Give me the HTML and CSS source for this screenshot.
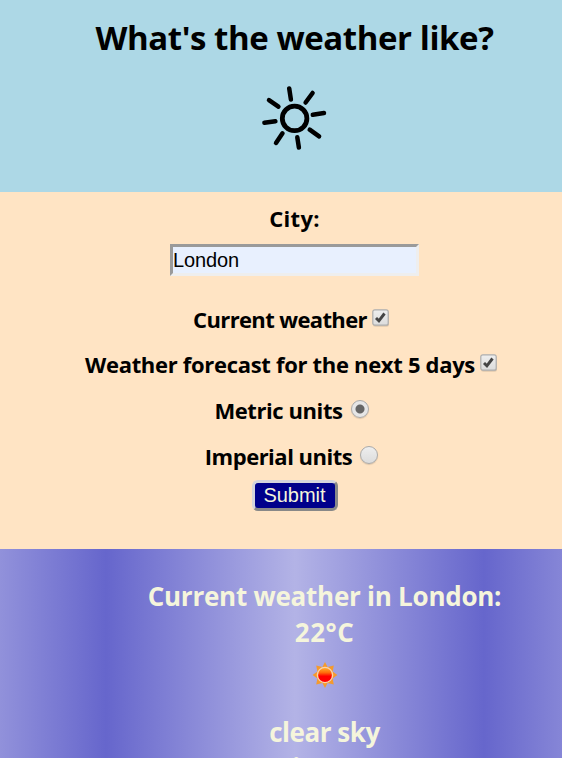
FILE: index.html
```html
<!DOCTYPE html>
<html lang="en">
<head>
<meta charset="utf-8">
<title>What's the weather like?</title>
<link rel="stylesheet" href="styles.css">
</head>
<body>
<header class="header">
  <h1 class="title">What's the weather like?</h1>
  <svg class="logo" width="68" height="68" viewBox="-34 -34 68 68" fill="none" stroke="#000" stroke-width="4.5" stroke-linecap="round">
    <circle cx=".6" cy=".4" r="12.3" stroke-width="4.8"/>
    <path d="M-3.1-18.5-4.8-29.6M11.6-15.5 18.6-25M18.8-3.2 30-5M15.7 11.7 25.1 18.4M3.3 19.3 4.9 29.6M-11.5 15.3-18 25M-18.6 3.2-29.6 4.8M-15.6-11.4-25-17.9"/>
  </svg>
</header>
<form class="form">
  <label class="label city" for="city">City:</label>
  <input class="input" id="city" type="text" value="London">
  <label class="row current"><span class="text">Current weather</span><svg class="check" width="18" height="19" viewBox="0 0 18 19"><use href="#box"/></svg></label>
  <label class="row forecast"><span class="text">Weather forecast for the next 5 days</span><svg class="check" width="18" height="19" viewBox="0 0 18 19"><use href="#box"/></svg></label>
  <label class="row metric"><span class="text">Metric units</span><span class="radio on"></span></label>
  <label class="row imperial"><span class="text">Imperial units</span><span class="radio"></span></label>
  <button class="submit" type="button">Submit</button>
</form>
<section class="result">
  <h2 class="place">Current weather in London:</h2>
  <p class="temp">22°C</p>
  <svg class="sun" width="26" height="28" viewBox="-13 -14 26 28">
    <defs><linearGradient id="g" x2="0" y2="1"><stop offset="0" stop-color="#ffb530"/><stop offset=".35" stop-color="#ff6a0a"/><stop offset=".58" stop-color="#f00"/></linearGradient></defs>
    <path fill="#f59a2c" d="M0-13 2.6-8 8.8-9.6 7.6-3.4 12.4 0 7.6 3.4 8.8 9.6 2.6 8 0 13-2.6 8-8.8 9.6-7.6 3.4-12.4 0-7.6-3.4-8.8-9.6-2.6-8Z"/>
    <circle r="7.6" fill="url(#g)" stroke="#f8d3ae" stroke-width="1.4"/>
  </svg>
  <p class="sky">clear sky</p>
  <p class="more">Min 22°C</p>
</section>
<svg class="symbols" width="0" height="0">
  <linearGradient id="face" x2="0" y2="1"><stop offset="0" stop-color="#eee"/><stop offset="1" stop-color="#dcdcdc"/></linearGradient>
  <symbol id="box" viewBox="0 0 18 19">
    <rect x="1" y="1.8" width="16" height="16" rx="2.5" fill="#000" opacity=".12"/>
    <rect x=".8" y=".8" width="15.4" height="15.4" rx="2" fill="url(#face)" stroke="#adadad" stroke-width="1.2"/>
    <path d="M4 9 6.9 11.8 12.5 4.5" fill="none" stroke="#444" stroke-width="2.9"/>
  </symbol>
</svg>
</body>
</html>
```
FILE: styles.css
```css
* { box-sizing: border-box; }
body { margin: 0; height: 758px; overflow: hidden; font-family: "Open Sans", "Noto Sans", sans-serif; font-weight: 700; color: #000; }
h1, h2, p { margin: 0; font-weight: 700; white-space: nowrap; }
.header { height: 192px; background: #add8e6; display: flex; flex-direction: column; align-items: center; padding: 14px 0 0 27px; }
.title { font-size: 33px; line-height: 48px; letter-spacing: -.43px; }
.logo { margin: 22px 1px 0 0; }
.form { height: 357px; background: #ffe4c4; display: flex; flex-direction: column; align-items: center; padding: 11px 0 0 27px; font-size: 22px; }
.label { line-height: 30px; }
.city { letter-spacing: .3px; }
.input { width: 249px; height: 32px; margin: 11px 0 28px; padding: 0; border: 3px solid; border-color: #9a9a9a #eee #eee #9a9a9a; background: #e8f0fe; font: 20px "Liberation Sans", sans-serif; letter-spacing: -.1px; }
.row { height: 45.7px; display: flex; align-items: flex-start; line-height: 30px; white-space: nowrap; margin-left: -6px; }
.current { height: 45px; letter-spacing: -.63px; }
.forecast { height: 46.4px; letter-spacing: -.31px; }
.metric { letter-spacing: -.42px; }
.imperial { letter-spacing: -.5px; }
.check { margin: 5px 0 0 5px; }
.radio { width: 18px; height: 18px; margin: 5px 0 0 8px; border: 1px solid #aaa; border-radius: 50%; background: linear-gradient(#eee, #dcdcdc); box-shadow: 0 1px 1px #0002; }
.on { background: radial-gradient(circle, #666 4px, #e6e6e6 5px); }
.submit { width: 86px; height: 31px; flex: none; margin-top: -7px; padding: 0; border: 3px solid; border-color: #d5d5dc #888 #888 #d5d5dc; border-radius: 6px; background: #00008b; color: #f5f5dc; font: 20px/22px "Liberation Sans", sans-serif; }
.result { height: 209px; overflow: hidden; display: flex; flex-direction: column; align-items: center; padding: 29px 0 0 87px; color: #f5f5dc; font-size: 26px; line-height: 36px; background: linear-gradient(90deg, #b3b3e6, #66c 50%, #b3b3e6) -83px 0 / 378px 100%; }
.place { font-size: 26px; letter-spacing: -.25px; }
.temp { letter-spacing: .5px; }
.sun { flex: none; margin-top: 11px; }
.sky { margin-top: 25px; letter-spacing: -.45px; }
.symbols { position: absolute; }
```
